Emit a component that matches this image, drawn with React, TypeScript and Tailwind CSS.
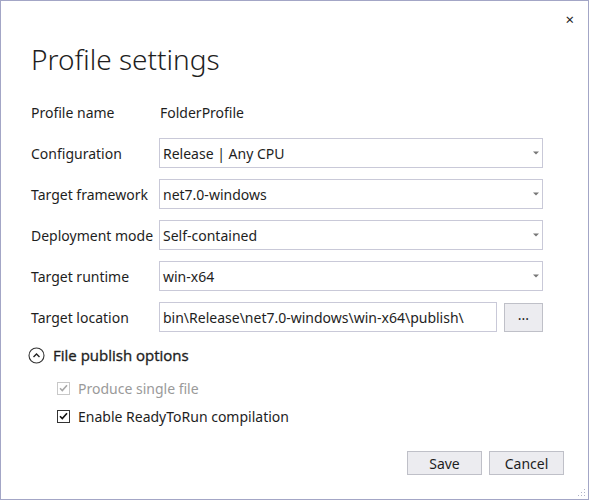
import React from "react";

const font = { fontFamily: '"Noto Sans", "Open Sans", sans-serif' };

const Caret: React.FC = () => (
  <svg width="6" height="4" viewBox="0 0 6 4" className="shrink-0">
    <path d="M0 0.5h6L3 3.5z" fill="#777777" />
  </svg>
);

const Combo: React.FC<{ value: string }> = ({ value }) => (
  <div className="flex h-[30px] w-[384px] items-center justify-between border border-[#c9c9d8] bg-white pl-[3px] pr-[3px]">
    <span className="text-[14px] text-[#1e1e1e]">{value}</span>
    <Caret />
  </div>
);

const Label: React.FC<{ children: React.ReactNode }> = ({ children }) => (
  <div className="flex h-[30px] items-center text-[14px] text-[#1e1e1e]">{children}</div>
);

const Check: React.FC<{ disabled?: boolean }> = ({ disabled }) => (
  <div
    className={
      "flex h-[13px] w-[13px] items-center justify-center border bg-white " +
      (disabled ? "border-[#c8c8c8]" : "border-[#333333]")
    }
  >
    <svg width="9" height="8" viewBox="0 0 9 8">
      <path
        d="M1 4.2l2.3 2.3L8 1.2"
        fill="none"
        stroke={disabled ? "#a8a8a8" : "#111111"}
        strokeWidth="1.6"
      />
    </svg>
  </div>
);

const Button: React.FC<{ children: React.ReactNode; className?: string }> = ({ children, className }) => (
  <button
    className={
      "flex h-[24px] items-center justify-center border border-[#bfc0c8] bg-[#ececf0] text-[14px] text-[#1e1e1e] " +
      (className ?? "")
    }
  >
    {children}
  </button>
);

export default function App() {
  const rows: Array<[string, string]> = [
    ["Configuration", "Release | Any CPU"],
    ["Target framework", "net7.0-windows"],
    ["Deployment mode", "Self-contained"],
    ["Target runtime", "win-x64"],
  ];

  return (
    <div style={font} className="relative flex h-[500px] w-[589px] flex-col border border-[#a3a6c6] bg-white">
      <div className="flex h-[38px] justify-end pr-[14px] pt-[10px]">
        <span className="text-[15px] leading-[16px] text-[#1e1e1e]">×</span>
      </div>

      <h1 className="pl-[30px] text-[28px] font-light leading-[40px] text-[#1e1e1e]">Profile settings</h1>

      <div className="mt-[18px] grid grid-cols-[128px_auto] gap-y-[11px] pl-[30px]">
        <Label>Profile name</Label>
        <div className="flex h-[30px] items-center pl-[1px] text-[14px] text-[#1e1e1e]">FolderProfile</div>

        {rows.map(([label, value]) => (
          <React.Fragment key={label}>
            <Label>{label}</Label>
            <Combo value={value} />
          </React.Fragment>
        ))}

        <Label>Target location</Label>
        <div className="flex w-[384px] items-center gap-[7px]">
          <div className="flex h-[30px] w-[338px] items-center border border-[#c9c9d8] pl-[3px] text-[14px] text-[#1e1e1e]">
            bin\Release\net7.0-windows\win-x64\publish\
          </div>
          <Button className="h-[29px] w-[39px] pb-[6px]">...</Button>
        </div>
      </div>

      <div className="mt-[12px] flex items-center gap-[8px] pl-[27px]">
        <svg width="17" height="17" viewBox="0 0 17 17">
          <circle cx="8.5" cy="8.5" r="7.5" fill="none" stroke="#333333" strokeWidth="1.1" />
          <path d="M5.5 10l3-3 3 3" fill="none" stroke="#222222" strokeWidth="1.4" />
        </svg>
        <span
          style={{ fontFamily: '"Open Sans", "Noto Sans", sans-serif' }}
          className="text-[15px] text-[#1e1e1e] [-webkit-text-stroke:0.35px_#1e1e1e]"
        >
          File publish options
        </span>
      </div>

      <div className="mt-[12px] flex flex-col gap-[9px] pl-[56px]">
        <div className="flex h-[19px] items-center gap-[8px]">
          <Check disabled />
          <span className="text-[14px] text-[#9a9a9a]">Produce single file</span>
        </div>
        <div className="flex h-[19px] items-center gap-[8px]">
          <Check />
          <span className="text-[14px] text-[#1e1e1e]">Enable ReadyToRun compilation</span>
        </div>
      </div>

      <div className="mt-auto mb-[24px] flex justify-end gap-[7px] pr-[24px]">
        <Button className="w-[75px]">Save</Button>
        <Button className="w-[75px]">Cancel</Button>
      </div>

      <svg width="10" height="10" viewBox="0 0 10 10" className="absolute bottom-[2px] right-[2px]">
        {[
          [8, 2], [8, 5], [5, 5], [8, 8], [5, 8], [2, 8],
        ].map(([x, y]) => (
          <rect key={`${x}-${y}`} x={x} y={y} width="1" height="1" fill="#b0b3c8" />
        ))}
      </svg>
    </div>
  );
}
